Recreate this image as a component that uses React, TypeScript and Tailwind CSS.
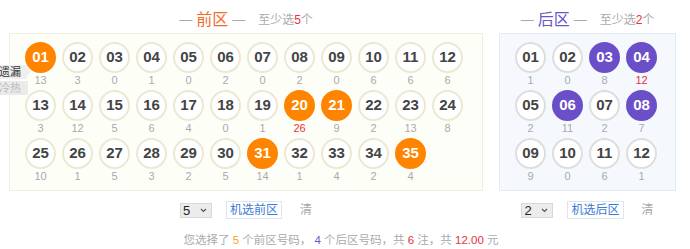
import React from "react";

type Ball = { n: string; miss: number; on?: boolean };

const front: Ball[] = [
    [13, 3, 0, 1, 0, 2, 0, 2, 0, 6, 6, 6],
    [3, 12, 5, 6, 4, 0, 1, 26, 9, 2, 13, 8],
    [10, 1, 5, 3, 2, 5, 14, 1, 4, 2, 4],
]
    .flat()
    .map((miss, i) => {
        const n = String(i + 1).padStart(2, "0");
        return { n, miss, on: ["01", "20", "21", "31", "35"].includes(n) };
    });

const back: Ball[] = [1, 0, 8, 12, 2, 11, 2, 7, 9, 0, 6, 1].map((miss, i) => {
    const n = String(i + 1).padStart(2, "0");
    return { n, miss, on: ["03", "04", "06", "08"].includes(n) };
});

function BallCell({ b, hot, zone }: { b: Ball; hot: boolean; zone: "front" | "back" }) {
    const onCls = zone === "front" ? "bg-[#ff8400] border-[#ff8400] text-white" : "bg-[#6a4fc9] border-[#6a4fc9] text-white";
    const offCls = zone === "front" ? "bg-white border-[#ebe8d3] text-[#444]" : "bg-white border-[#dedede] text-[#444]";
    return (
        <div className="h-[48px] w-[37px] flex flex-col items-center">
            <div
                className={[
                    "w-[31px] h-[31px] rounded-full border-2 flex items-center justify-center text-[15px] font-bold",
                    b.on ? onCls : offCls,
                ].join(" ")}
            >
                {b.n}
            </div>
            <div className={["text-[11px] leading-[14px]", hot ? "text-[#e5333a]" : "text-[#aaa]"].join(" ")}>
                {b.miss}
            </div>
        </div>
    );
}

function Header({ title, min, color }: { title: string; min: number; color: string }) {
    return (
        <div className="h-[33px] pt-[6px] flex items-center justify-center">
            <span className="text-[#aaa] text-[13px]">—</span>
            <span className={["text-[16px] mx-[4px]", color].join(" ")}>{title}</span>
            <span className="text-[#aaa] text-[13px]">—</span>
            <span className="ml-[13px] text-[12px] text-[#aaa]">
                至少选<span className="text-[#e5333a]">{min}</span>个
            </span>
        </div>
    );
}

function Controls({ value, label }: { value: number; label: string }) {
    return (
        <div className="mt-[10px] h-[18px] flex items-center justify-center">
            <div className="w-[32px] h-[15px] bg-[#ececec] border border-[#d8d8d8] flex items-center justify-between pl-[2px] pr-[4px] text-[13px] text-[#222]">
                <span className="leading-none">{value}</span>
                <svg width="7" height="5" viewBox="0 0 7 5">
                    <path d="M1 1l2.5 2.5L6 1" stroke="#555" strokeWidth="1.2" fill="none" />
                </svg>
            </div>
            <div className="ml-[14px] h-[18px] px-[3px] border border-[#dde6f0] bg-white text-[#3a7bd5] text-[12px] leading-[16px]">
                {label}
            </div>
            <span className="ml-[18px] text-[12px] text-[#aaa]">清</span>
        </div>
    );
}

export default function App() {
    const frontMax = Math.max(...front.map((b) => b.miss));
    const backMax = Math.max(...back.map((b) => b.miss));

    return (
        <div className="relative w-[690px] h-[249px] bg-white font-['Liberation_Sans','Noto_Sans_CJK_SC',sans-serif] overflow-hidden">
            <div className="flex pl-[9px] gap-[16px]">
                <div className="w-[474px]">
                    <Header title="前区" min={5} color="text-[#f26b2e]" />
                    <div className="h-[158px] border border-[#f1efdc] bg-[#fefef9] pl-[12px] pt-[8px]">
                        <div className="grid grid-cols-[repeat(12,37px)]">
                            {front.map((b) => (
                                <BallCell key={b.n} b={b} hot={b.miss === frontMax} zone="front" />
                            ))}
                        </div>
                    </div>
                    <Controls value={5} label="机选前区" />
                </div>

                <div className="w-[177px]">
                    <Header title="后区" min={2} color="text-[#6a56c8]" />
                    <div className="h-[158px] border border-[#e2ebf6] bg-[#f5f9fe] pl-[12px] pt-[8px]">
                        <div className="grid grid-cols-[repeat(4,37px)]">
                            {back.map((b) => (
                                <BallCell key={b.n} b={b} hot={b.miss === backMax} zone="back" />
                            ))}
                        </div>
                    </div>
                    <Controls value={2} label="机选后区" />
                </div>
            </div>

            <div className="mt-[13px] pr-[8px] text-center text-[11.5px] leading-[16px] text-[#aaa]">
                您选择了 <span className="text-[#f7a030]">5</span> 个前区号码，{" "}
                <span className="text-[#6a56c8]">4</span> 个后区号码，共{" "}
                <span className="text-[#e5333a]">6</span> 注，共{" "}
                <span className="text-[#e5333a]">12.00</span> 元
            </div>

            <div className="absolute left-[-3px] top-[65px] flex flex-col">
                <div className="relative w-[30px] h-[14px] bg-[#efefef] text-[11px] leading-[14px] text-[#333] pl-[2px]">
                    遗漏
                    <span className="absolute right-[-4px] top-[3px] w-0 h-0 border-y-[4px] border-y-transparent border-l-[4px] border-l-[#efefef]" />
                </div>
                <div className="mt-[2px] w-[31px] h-[14px] bg-[#ebebeb] text-[11px] leading-[14px] text-[#bbb] pl-[2px]">
                    冷热
                </div>
            </div>
        </div>
    );
}
